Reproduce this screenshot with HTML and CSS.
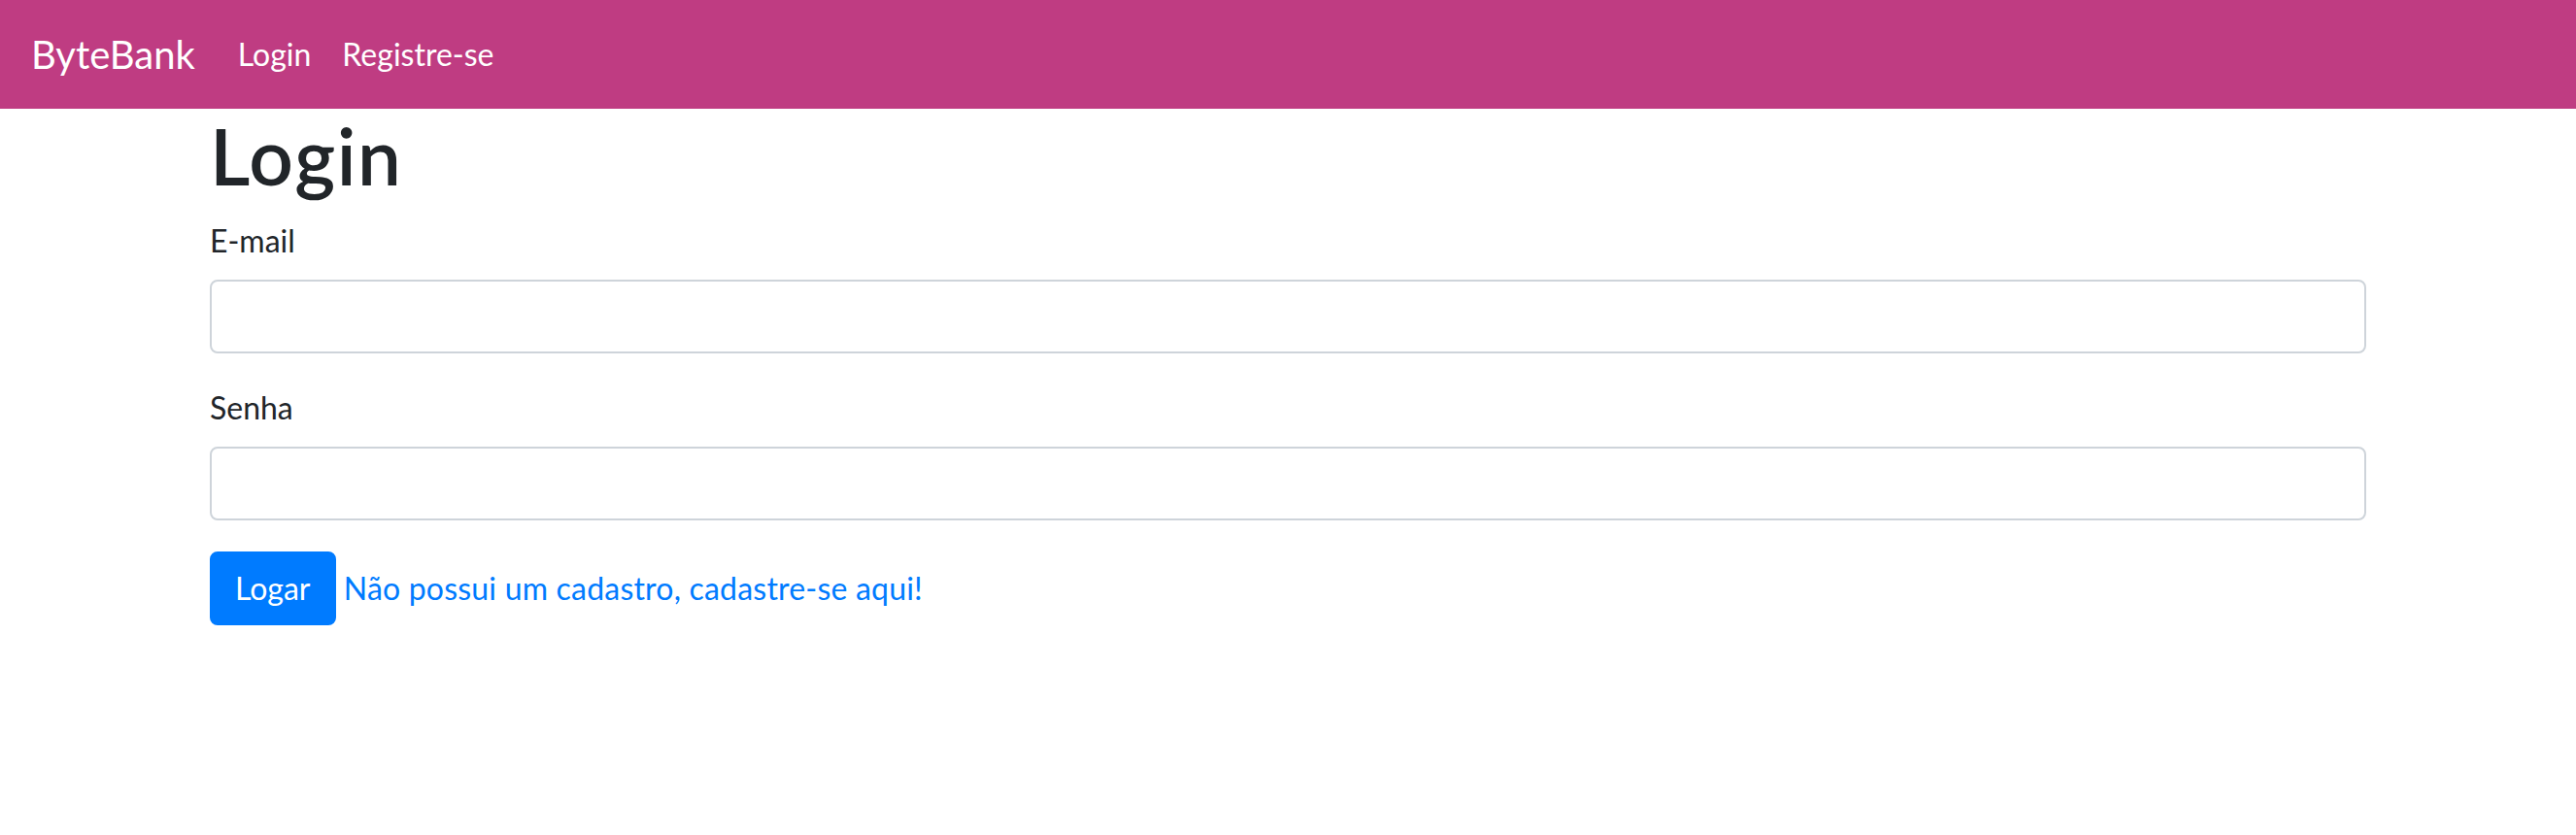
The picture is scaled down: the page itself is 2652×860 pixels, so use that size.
FILE: index.html
```html
<!DOCTYPE html>
<html lang="pt-BR">
<head>
<meta charset="utf-8">
<title>ByteBank - Login</title>
<link rel="stylesheet" href="styles.css">
</head>
<body>
<nav class="navbar">
  <a class="brand" href="#">ByteBank</a>
  <ul class="nav">
    <li><a class="nav-link" href="#">Login</a></li>
    <li><a class="nav-link" href="#">Registre-se</a></li>
  </ul>
</nav>
<main class="container">
  <h1 class="title">Login</h1>
  <form class="form">
    <div class="form-group">
      <label class="label" for="email">E-mail</label>
      <input class="input" id="email" type="email">
    </div>
    <div class="form-group">
      <label class="label" for="senha">Senha</label>
      <input class="input" id="senha" type="password">
    </div>
    <div class="actions">
      <button class="btn" type="button">Logar</button> <a class="link" href="#">Não possui um cadastro, cadastre-se aqui!</a>
    </div>
  </form>
</main>
</body>
</html>
```
FILE: styles.css
```css
* { box-sizing: border-box; }
html, body { margin: 0; padding: 0; }
body {
  font-family: "Lato", "Open Sans", "Liberation Sans", sans-serif;
  font-size: 32px;
  line-height: 1.5;
  color: #212529;
  background: #fff;
}
.navbar {
  display: flex;
  align-items: center;
  padding: 16px 32px;
  background: #bf3c82;
}
.brand {
  display: inline-block;
  padding: 10px 0;
  margin-right: 28px;
  font-size: 40px;
  line-height: 60px;
  color: #fff;
  text-decoration: none;
}
.nav {
  display: flex;
  list-style: none;
  margin: 0;
  padding: 0;
}
.nav-link {
  display: block;
  padding: 16px 16px;
  color: #fff;
  text-decoration: none;
  font-size: 32px;
  line-height: 48px;
}
.container {
  width: 2280px;
  margin: 0 auto;
  padding: 0 30px;
}
.title {
  margin: 0 0 16px;
  font-size: 80px;
  line-height: 96px;
  font-weight: 600;
  letter-spacing: 1.5px;
}
.form { margin: 0; }
.form-group { margin-bottom: 32px; }
.label {
  display: inline-block;
  margin-bottom: 16px;
}
.input {
  display: block;
  width: 100%;
  height: 76px;
  padding: 12px 24px;
  font: inherit;
  color: #495057;
  background: #fff;
  border: 2px solid #ced4da;
  border-radius: 8px;
}
.actions { line-height: 48px; }
.btn {
  display: inline-block;
  padding: 12px 24px;
  font: inherit;
  line-height: 48px;
  color: #fff;
  background: #007bff;
  border: 2px solid #007bff;
  border-radius: 8px;
  vertical-align: middle;
}
.link {
  color: #007bff;
  text-decoration: none;
  vertical-align: middle;
  letter-spacing: 0.2px;
}
```
